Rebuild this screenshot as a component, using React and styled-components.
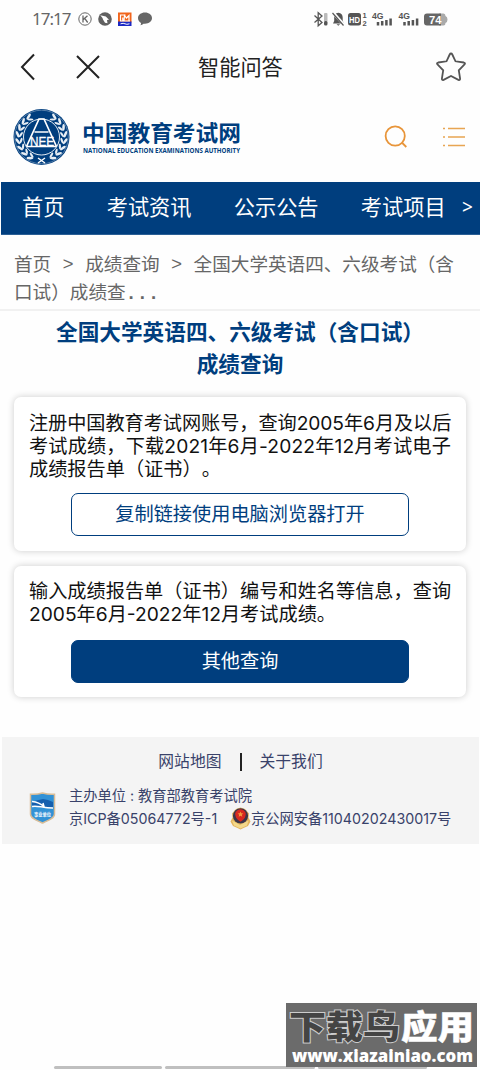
import React from 'react';
import styled, { createGlobalStyle } from 'styled-components';

const GlobalStyle = createGlobalStyle`
	* {
		box-sizing: border-box;
	}

	body {
		margin: 0;
		background: #fefefe;
		font-family: Inter, 'Noto Sans CJK SC', sans-serif;
		text-spacing-trim: space-all;
	}

	svg {
		display: block;
		flex: none;
		overflow: visible;
	}
`;

const Screen = styled.div`
	width: 480px;
	height: 1070px;
	display: flex;
	flex-direction: column;
	position: relative;
	overflow: hidden;
`;

const StatusBar = styled.div`
	height: 38px;
	padding: 0 31px 0 32px;
	display: flex;
	align-items: center;
	justify-content: space-between;
`;

const StatusGroup = styled.div`
	display: flex;
	align-items: center;
	gap: ${({ gap }) => gap}px;
`;

const Clock = styled.span`
	width: 41px;
	font: 17px/20px 'Noto Sans', sans-serif;
	letter-spacing: -1px;
	color: #666;
	white-space: nowrap;
	margin-right: 2px;
`;

const TitleBar = styled.header`
	height: 58px;
	padding: 0 13px 0 20px;
	display: grid;
	grid-template-columns: 15px 26px 1fr 32px;
	column-gap: 40px;
	align-items: center;
`;

const PageTitle = styled.h1`
	margin: 0;
	padding-left: 57px;
	font-size: 21.2px;
	line-height: 30px;
	font-weight: 400;
	color: #222;
`;

const SiteHeader = styled.div`
	height: 86px;
	padding: 0 14px 5px 12px;
	display: flex;
	align-items: center;
`;

const HeaderActions = styled.div`
	margin-left: auto;
	display: flex;
	align-items: center;
	gap: 34px;
`;

const Nav = styled.nav`
	height: 53px;
	margin-left: 1px;
	padding: 0 0 2px 21px;
	display: flex;
	align-items: center;
	gap: 42.3px;
	background: #003e7e;
	color: #fff;
	font-size: 21.2px;
	line-height: 30px;
	white-space: nowrap;
	border-bottom: 1px solid #2b5f95;
`;

const NavMore = styled.span`
	margin-left: -26px;
	font: 19px/30px 'Noto Sans', sans-serif;
`;

const Breadcrumb = styled.div`
	height: 76px;
	padding: 15px 0 0 14px;
	font-size: 18.6px;
	line-height: 28px;
	color: #666;
	white-space: nowrap;
	border-bottom: 2px solid #f1f1f1;
`;

const Crumbs = styled.div`
	height: 28px;
	display: flex;
`;

const Separator = styled.span`
	width: 34px;
	padding-top: 2px;
	text-align: center;
	font-family: 'Liberation Mono', monospace;
`;

const Dots = styled.span`
	font-family: 'Liberation Mono', monospace;
	font-weight: 700;
`;

const Heading = styled.h2`
	margin: 5px 0 17px;
	font-size: 21.65px;
	line-height: 32px;
	font-weight: 700;
	text-align: center;
	color: #003e7e;
`;

const Card = styled.section`
	height: ${({ height }) => height}px;
	margin: 0 14px ${({ gap }) => gap}px;
	padding: ${({ top }) => top}px 0 0 15px;
	background: #fff;
	border-radius: 7px;
	box-shadow: 0 0 7px rgba(0, 0, 0, 0.2);
`;

const Line = styled.div`
	font-size: 19.2px;
	line-height: 23px;
	color: #111;
	white-space: nowrap;
	letter-spacing: ${({ spacing }) => spacing || 0}px;
`;

const Button = styled.button`
	display: block;
	width: 338px;
	height: 43px;
	margin: ${({ top }) => top}px 0 0 42px;
	padding: 0 0 4px;
	border: 1.5px solid #003e7e;
	border-radius: 7px;
	background: ${({ filled }) => (filled ? '#003e7e' : '#fff')};
	color: ${({ filled }) => (filled ? '#fff' : '#003e7e')};
	font-family: inherit;
	font-size: 19.2px;
`;

const Footer = styled.footer`
	height: 107px;
	margin: 0 1px 0 2px;
	padding-top: 13px;
	background: #f4f4f4;
	color: #39426a;
	white-space: nowrap;
`;

const FooterLinks = styled.div`
	display: flex;
	justify-content: center;
	align-items: center;
	gap: 18px;
	font-size: 15.8px;
	line-height: 24px;
`;

const Divider = styled.span`
	width: 2px;
	height: 18px;
	background: #222;
`;

const FooterInfo = styled.div`
	display: flex;
	align-items: center;
	padding: 10px 0 0 27px;
	font-size: 14.25px;
	line-height: 23px;
`;

const FooterText = styled.div`
	margin-left: 13px;
`;

const Records = styled.div`
	display: flex;
	align-items: center;
`;

const Record = styled.span`
	width: ${({ width }) => width}px;
`;

const HomeBar = styled.div`
	margin: auto 53px 1px 54px;
	height: 3px;
	display: grid;
	grid-template-columns: 108px 150px 109px;
	gap: 3px;
`;

const HomeSegment = styled.span`
	background: #bfbfbf;
	border-radius: 2px;
`;

const Watermark = styled.div`
	position: absolute;
	right: 3px;
	bottom: 3px;
	width: 191px;
	height: 64px;
	background: #6b6b6b;
`;

const Emblem = () => {
	const leaves = [];
	for (let i = 0; i < 8; i++) {
		const angle = 30 + i * 17;
		leaves.push(angle, -angle);
	}
	return (
		<svg width="59" height="58" viewBox="-29.5 -29 59 58">
			<circle r="28" fill="#003e7e" />
			<circle r="26.8" fill="none" stroke="#8faac6" strokeWidth="0.6" />
			{leaves.map((angle) => (
				<g key={angle} transform={`rotate(${angle}) translate(0 -22.3)`} fill="#e8eef4">
					<ellipse cx="0" cy="-2" rx="3.4" ry="1.3" transform={`rotate(${angle > 0 ? 28 : -28})`} />
					<ellipse cx="0" cy="1.8" rx="3" ry="1.1" transform={`rotate(${angle > 0 ? -28 : 28})`} />
				</g>
			))}
			<circle r="18" fill="#003e7e" stroke="#fff" strokeWidth="0.9" />
			<path d="M-3.500 26L3.500 21M3.500 26L-3.500 21" stroke="#fff" strokeWidth="1.4" />
			<path d="M-15 9.500L-2.500-18H2.500L15 9.500M-7-5H7M-15 9.500H15" fill="none" stroke="#fff" strokeWidth="1.700" />
			<text x="-11.500" y="8.700" textLength="24" lengthAdjust="spacingAndGlyphs" fill="#fff" stroke="#fff" strokeWidth="0.300" fontFamily="Liberation Sans" fontSize="13">
				NEE
			</text>
		</svg>
	);
};

const LogoText = styled.svg`
	margin-left: 9px;
`;

const Wordmark = () => (
	<LogoText width="170" height="50" viewBox="0 0 170 50">
		<g fill="#003e7e" fontWeight="700">
			<text x="2" y="28.500" textLength="159" lengthAdjust="spacingAndGlyphs" fontFamily="Noto Sans CJK SC" fontSize="22">
				中国教育考试网
			</text>
			<text x="3" y="40.800" textLength="157" lengthAdjust="spacingAndGlyphs" fontFamily="Open Sans" fontSize="7.600">
				NATIONAL EDUCATION EXAMINATIONS AUTHORITY
			</text>
		</g>
	</LogoText>
);

const NotificationIcons = () => (
	<svg width="76" height="16" viewBox="0 0 76 16">
		<circle cx="7" cy="8" r="6.2" fill="none" stroke="#666" strokeWidth="1" />
		<path d="M5 4.5v7M9.5 4.7L5.3 8.5M6.7 7.3l3 4.2" fill="none" stroke="#666" strokeWidth="1.3" />
		<circle cx="27" cy="8" r="6.8" fill="#606060" />
		<path d="M22.3 4.2l5.5 1.3 3.2 3.3-2 .3.5 3.2-2.5-.6-2-3.2-.5-1.6z" fill="#fff" />
		<rect x="40" y="1.5" width="13.500" height="10" fill="#f1651c" />
		<rect x="40" y="10.500" width="13.500" height="4.500" fill="#1b28c4" />
		<path d="M42.500 9.500V4h5M44.800 9.500V6.500M46 9.500l.5-5 2 2.500 2.500-2.500v5M42 10h10" fill="none" stroke="#fff" strokeWidth="1.200" />
		<path d="M42.500 12.800q3-1 4.500 0t4.500 0" fill="none" stroke="#fff" strokeWidth="1" />
		<path d="M67 1.500c4 0 7 2.400 7 5.600s-3 5.600-7 5.600h-1.500c-.8.900-2 1.400-3.200 1.500.6-.7.8-1.400.7-2.300C61 10.900 60 9.200 60 7.100c0-3.200 3-5.600 7-5.600z" fill="#666" />
	</svg>
);

const SystemIcons = () => (
	<svg width="136" height="18" viewBox="0 0 136 18" fontFamily="Liberation Sans" fontWeight="700">
		<path d="M1.500 5.500l7.500 7-3.800 3.300V2.700L9 6l-7.500 6.500" fill="none" stroke="#555" strokeWidth="1.300" />
		<rect x="11" y="3" width="3.500" height="9" rx="1" fill="#bbb" />
		<rect x="11" y="11" width="3.500" height="4.500" rx="1.500" fill="#555" />
		<path d="M25.300 2.800c3 .3 4.400 2.200 4.400 4.700v3.500l1.500 2.500H20l1.200-2.500V7.500c0-2.500 1.200-4.400 4.100-4.700zM23.500 14.200h3.600l-1.800 1.500z" fill="#555" />
		<path d="M19.500 2l12 13.500" stroke="#fefefe" strokeWidth="3" />
		<path d="M19.500 3l11 12.500" stroke="#555" strokeWidth="1.200" />
		<rect x="35" y="3" width="13" height="12.500" rx="2.500" fill="#555" />
		<text x="36" y="12.500" fontSize="9" textLength="11" lengthAdjust="spacingAndGlyphs" fill="#fff">HD</text>
		<g fill="#555">
			<text x="49.500" y="8" fontSize="7.500">1</text>
			<text x="49.500" y="15.800" fontSize="7.500">2</text>
			<text x="59" y="8.500" fontSize="8.500" textLength="11.500" lengthAdjust="spacingAndGlyphs">4G</text>
			<text x="85.500" y="8.500" fontSize="8.500" textLength="11.500" lengthAdjust="spacingAndGlyphs">4G</text>
		</g>
		{[64, 90.5].map((x) => (
			<path
				key={x}
				d={`M${x + 1} 12v3.500M${x + 5.2} 11v4.500M${x + 9.4} 10v5.500M${x + 13.6} 8.500v7`}
				stroke="#555"
				strokeWidth="2.500"
			/>
		))}
		<path d="M126 3.500h4.500q2 0 2 2.500 2 .5 2 3.500t-2 3.500q0 2.500-2 2.500H126z" fill="#aaa" />
		<path d="M114 3.500h14v12h-14a3 3 0 0 1-3-3v-6a3 3 0 0 1 3-3z" fill="#666" />
		<text x="116" y="13.500" fontSize="11.500" textLength="12.500" lengthAdjust="spacingAndGlyphs" fill="#fff">74</text>
	</svg>
);

const Shield = () => (
	<svg width="27" height="34" viewBox="0 0 27 34">
		<path d="M13.500 3C17 4 21 4.500 25.500 4.200V24c0 4-5 6-12 9C6.500 30 1.500 28 1.500 24V4.200C6 4.500 10 4 13.500 3z" fill="#3292d6" stroke="#d9bd97" strokeWidth="1.500" />
		<path d="M3 11.500l11-2.500 5 1 5 2V18H15L3 16z" fill="#155fae" />
		<path d="M3 11.500c5 .5 8 1.500 12 5l-1-3.500M3 16.500c5-1.500 10 1.500 21 1.500" fill="none" stroke="#fff" strokeWidth="1.500" />
		<text x="5" y="25.500" fontFamily="Noto Sans CJK SC" fontWeight="700" fontSize="4.800" textLength="17" lengthAdjust="spacingAndGlyphs" fill="#fff">事业单位</text>
	</svg>
);

const PoliceBadge = () => (
	<svg width="21" height="23" viewBox="0 0 21 23">
		<path d="M10.500 .5L15 2l4 4.500-.5 4 2 4-2.500 4.500-4.500 2-3 1.500-3-1.500-4.500-2L.5 14.500l2-4L2 6.500 6 2z" fill="#e4b45d" />
		<path d="M2 13.500l8 4.500 8.500-4.500-1.500 5-6.500 3-6.500-3z" fill="#f3d88a" />
		<circle cx="10.500" cy="8.800" r="7.600" fill="#3c3548" />
		<path d="M10.500 2.200c4 .8 6 3 5 6.500-.5 3-2.500 4.500-5 6-2.500-1.500-4.500-3-5-6-1-3.500 1-5.700 5-6.500z" fill="#d7281f" />
		<path d="M10.500 4.500l.8 1.800 2 .2-1.500 1.200.5 2-1.800-1-1.800 1 .5-2-1.500-1.200 2-.2z" fill="#f49a3b" />
	</svg>
);

const App = () => (
	<>
		<GlobalStyle />
		<Screen>
			<StatusBar>
				<StatusGroup gap={3}>
					<Clock>17:17</Clock>
					<NotificationIcons />
				</StatusGroup>
				<SystemIcons />
			</StatusBar>
			<TitleBar>
				<svg width="16" height="28" viewBox="0 0 16 28">
					<path d="M14 1.500L2 14l12 12.500" fill="none" stroke="#222" strokeWidth="2" />
				</svg>
				<svg width="26" height="26" viewBox="0 0 26 26">
					<path d="M2 2l22 22M24 2L2 24" stroke="#222" strokeWidth="2" />
				</svg>
				<PageTitle>智能问答</PageTitle>
				<svg width="32" height="32" viewBox="0 0 32 32">
					<path
						d="M16 2.500q.8 0 1.300 1l3.200 6.800 8.300 1.200q2 .5.700 2l-5.700 5.800 1.300 8.200q.1 2-1.700 1.400L16 25l-7.400 3.900q-1.800.6-1.700-1.400l1.300-8.200-5.700-5.800q-1.300-1.500.7-2l8.300-1.200 3.200-6.800q.5-1 1.300-1z"
						fill="none"
						stroke="#555"
						strokeWidth="1.800"
					/>
				</svg>
			</TitleBar>
			<SiteHeader>
				<Emblem />
				<Wordmark />
				<HeaderActions>
					<svg width="24" height="24" viewBox="0 0 24 24" fill="none" stroke="#e8953a" strokeWidth="1.800">
						<circle cx="11.200" cy="11" r="9.600" />
						<path d="M17.800 17.500l4.500 4.500" />
					</svg>
					<svg width="24" height="22" viewBox="0 0 24 22" stroke="#e8a552" strokeWidth="1.600">
						<path d="M1 2.500h2M6 2.500h17M1 11h2M6 11h17M1 19.500h2M6 19.500h17" />
					</svg>
				</HeaderActions>
			</SiteHeader>
			<Nav>
				<span>首页</span>
				<span>考试资讯</span>
				<span>公示公告</span>
				<span>考试项目</span>
				<NavMore>&gt;</NavMore>
			</Nav>
			<Breadcrumb>
				<Crumbs>
					<span>首页</span>
					<Separator>&gt;</Separator>
					<span>成绩查询</span>
					<Separator>&gt;</Separator>
					<span>全国大学英语四、六级考试（含</span>
				</Crumbs>
				<div>
					口试）成绩查<Dots>...</Dots>
				</div>
			</Breadcrumb>
			<Heading>
				全国大学英语四、六级考试（含口试）
				<br />
				成绩查询
			</Heading>
			<Card height={154} gap={15} top={15}>
				<Line spacing={-0.07}>注册中国教育考试网账号，查询2005年6月及以后</Line>
				<Line spacing={0.15}>考试成绩，下载2021年6月-2022年12月考试电子</Line>
				<Line>成绩报告单（证书）。</Line>
				<Button top={12}>复制链接使用电脑浏览器打开</Button>
			</Card>
			<Card height={131} gap={40} top={14}>
				<Line>输入成绩报告单（证书）编号和姓名等信息，查询</Line>
				<Line>2005年6月-2022年12月考试成绩。</Line>
				<Button top={14} filled>其他查询</Button>
			</Card>
			<Footer>
				<FooterLinks>
					<span>网站地图</span>
					<Divider />
					<span>关于我们</span>
				</FooterLinks>
				<FooterInfo>
					<Shield />
					<FooterText>
						<div>主办单位 : 教育部教育考试院</div>
						<Records>
							<Record width={161}>京ICP备05064772号-1</Record>
							<PoliceBadge />
							<Record width={200}>京公网安备11040202430017号</Record>
						</Records>
					</FooterText>
				</FooterInfo>
			</Footer>
			<HomeBar>
				<HomeSegment />
				<HomeSegment />
				<HomeSegment />
			</HomeBar>
			<Watermark>
				<svg width="191" height="64" viewBox="0 0 191 64">
					<g fontFamily="Noto Sans CJK SC" fontWeight="900" fontSize="33">
						<text x="3" y="36" textLength="111" lengthAdjust="spacingAndGlyphs" fill="#444" stroke="#ccc" strokeWidth="2" paintOrder="stroke">下载鸟</text>
						<text x="115" y="36" textLength="73" lengthAdjust="spacingAndGlyphs" fill="#fff" stroke="#fff" strokeWidth="0.500">应用</text>
					</g>
					<text x="6" y="58.500" textLength="181" lengthAdjust="spacingAndGlyphs" fontFamily="Open Sans" fontWeight="800" fontSize="17" fill="#fff">
						www.xiazainiao.com
					</text>
				</svg>
			</Watermark>
		</Screen>
	</>
);

export default App;
